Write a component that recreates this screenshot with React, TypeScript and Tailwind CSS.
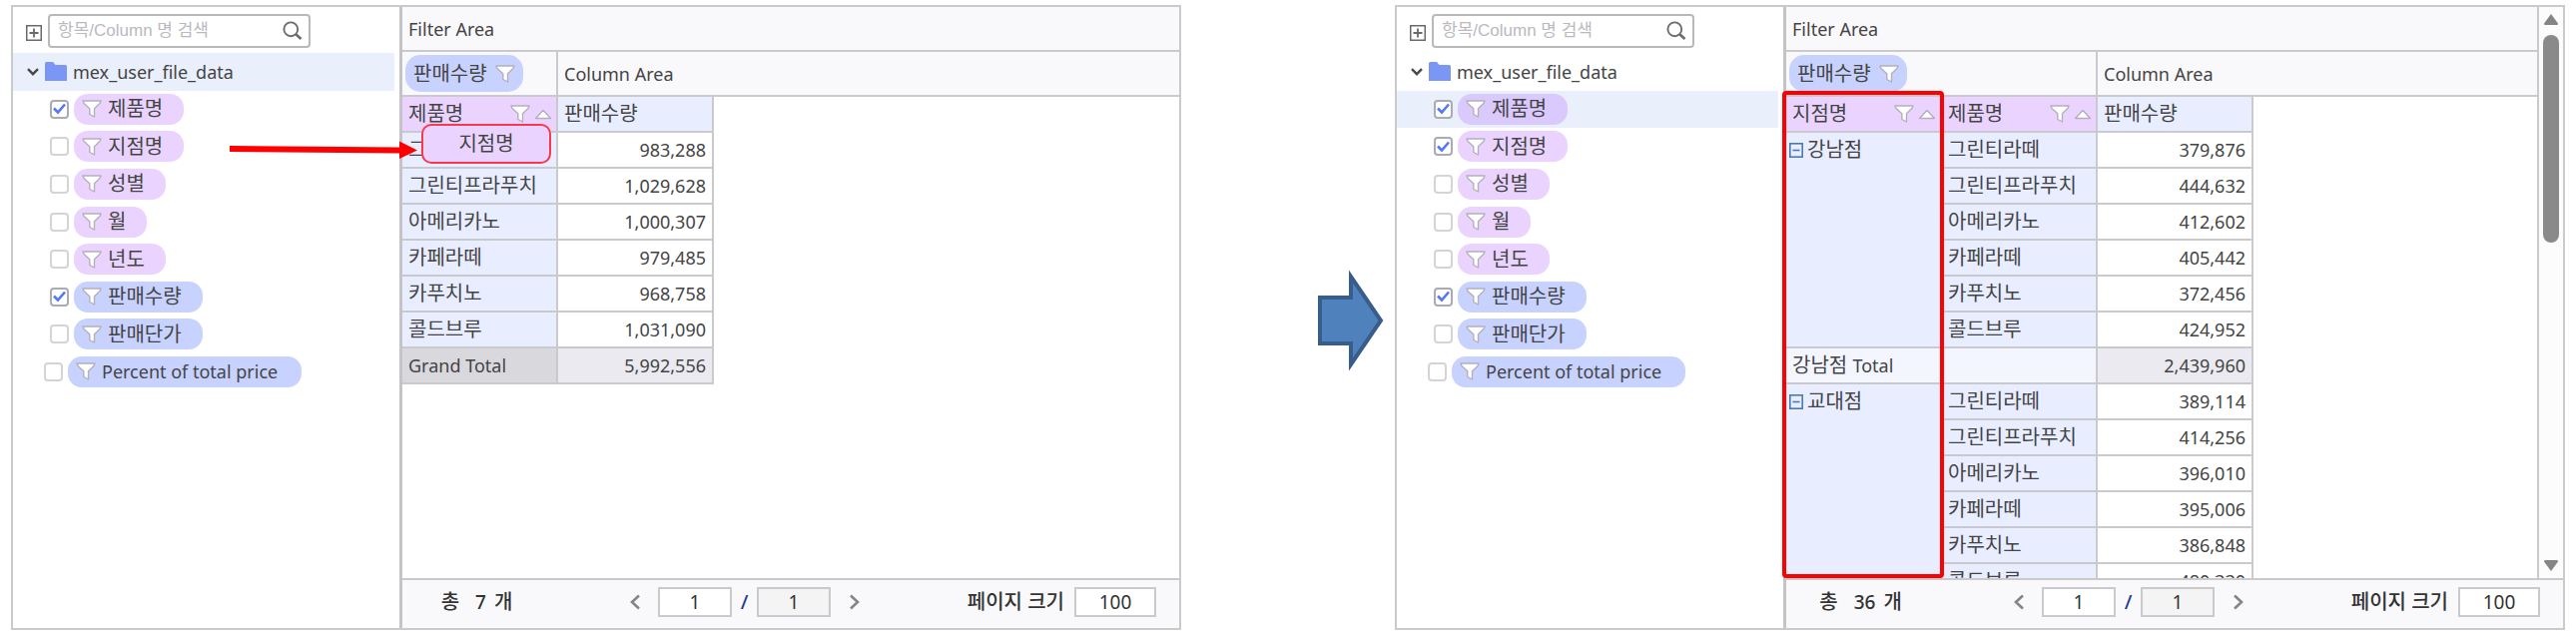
import React, { useState } from 'react';

type Tone = 'dimension' | 'measure';

interface Field {
  name: string;
  tone: Tone;
}

interface Row {
  product: string;
  value: string;
}

interface Branch {
  name: string;
  total?: string;
  rows: Row[];
}

const FIELDS: Field[] = [
  { name: '제품명', tone: 'dimension' },
  { name: '지점명', tone: 'dimension' },
  { name: '성별', tone: 'dimension' },
  { name: '월', tone: 'dimension' },
  { name: '년도', tone: 'dimension' },
  { name: '판매수량', tone: 'measure' },
  { name: '판매단가', tone: 'measure' },
  { name: 'Percent of total price', tone: 'measure' },
];

const PRODUCT_ROWS: Row[] = [
  { product: '그린티라떼', value: '983,288' },
  { product: '그린티프라푸치', value: '1,029,628' },
  { product: '아메리카노', value: '1,000,307' },
  { product: '카페라떼', value: '979,485' },
  { product: '카푸치노', value: '968,758' },
  { product: '콜드브루', value: '1,031,090' },
];

const BRANCHES: Branch[] = [
  {
    name: '강남점',
    total: '2,439,960',
    rows: [
      { product: '그린티라떼', value: '379,876' },
      { product: '그린티프라푸치', value: '444,632' },
      { product: '아메리카노', value: '412,602' },
      { product: '카페라떼', value: '405,442' },
      { product: '카푸치노', value: '372,456' },
      { product: '콜드브루', value: '424,952' },
    ],
  },
  {
    name: '교대점',
    rows: [
      { product: '그린티라떼', value: '389,114' },
      { product: '그린티프라푸치', value: '414,256' },
      { product: '아메리카노', value: '396,010' },
      { product: '카페라떼', value: '395,006' },
      { product: '카푸치노', value: '386,848' },
      { product: '콜드브루', value: '480,330' },
    ],
  },
];

const CELL = 'h-9 border-r-2 border-b-2 border-[#cacacc] p-0 font-normal';

// --- Icons ---

const FunnelIcon = () => (
  <svg viewBox="0 0 20 18" className="h-[18px] w-5 shrink-0">
    <path
      d="M1 1H19L18 3.5L12.5 8.8V17L7.8 14.5V8.8L2 3.5Z"
      fill="#fff"
      stroke="#b4b0ba"
      strokeWidth="1.4"
      strokeLinejoin="round"
    />
  </svg>
);

const SortIcon = () => (
  <svg viewBox="0 0 18 11" className="h-[11px] w-[18px] shrink-0">
    <path d="M1.5 9.5L9 1.5L16.5 9.5Z" fill="#fff" stroke="#b4b0ba" strokeWidth="1.4" strokeLinejoin="round" />
  </svg>
);

const ExpandAllIcon = () => (
  <svg viewBox="0 0 16 16" className="h-4 w-4" fill="none" stroke="#6a6a6a">
    <rect x="0.75" y="0.75" width="14.5" height="14.5" strokeWidth="1.5" />
    <path d="M8 3.5V12.5M3.5 8H12.5" strokeWidth="1.8" />
  </svg>
);

const CollapseIcon = () => (
  <svg viewBox="0 0 14 15" className="h-[15px] w-3.5 shrink-0" fill="none" stroke="#4a7ab0" strokeWidth="1.6">
    <rect x="0.8" y="0.8" width="12.4" height="13.4" />
    <path d="M3.5 7.5H10.5" />
  </svg>
);

const SearchIcon = () => (
  <svg viewBox="0 0 20 20" className="h-5 w-5" fill="none" stroke="#6c6c6c">
    <circle cx="8.3" cy="8.3" r="6.9" strokeWidth="1.9" />
    <path d="M13.2 13.2L18.5 18" strokeWidth="2.6" />
  </svg>
);

const FolderIcon = () => (
  <svg viewBox="0 0 22 19" className="h-[19px] w-[22px]">
    <path d="M0 1.5Q0 0 1.5 0H8L10.5 3H20.5Q22 3 22 4.5V19H0Z" fill="#7a97f5" />
  </svg>
);

const Chevron = ({ d }: { d: string }) => (
  <svg viewBox="0 0 12 16" className="h-4 w-3" fill="none" stroke="#858585" strokeWidth="2.6">
    <path d={d} />
  </svg>
);

// --- Sidebar ---

interface SidebarProps {
  id: string;
  initial: string[];
  active: string;
}

const FieldSidebar = ({ id, initial, active }: SidebarProps) => {
  const [checked, setChecked] = useState<string[]>(initial);

  const toggle = (name: string) => {
    setChecked(checked.includes(name) ? checked.filter((n) => n !== name) : [...checked, name]);
  };

  const pillColor = (field: Field) => {
    if (field.name === active) return 'bg-[#dac9fd]';
    return field.tone === 'dimension' ? 'bg-[#ead4ff]' : 'bg-[#c8d2ff]';
  };

  return (
    <aside className="w-[390px] shrink-0 border-r-[3px] border-[#c4c4c6] bg-white">
      <div className="flex h-[46px] items-center pt-0.5 pl-[13px]">
        <button type="button" aria-label="모두 펼치기" className="mr-1.5 pt-1">
          <ExpandAllIcon />
        </button>
        <div className="flex h-[34px] w-[263px] items-center rounded border-2 border-[#b9b9b9] pr-1.5 pl-2">
          <input
            type="text"
            aria-label="항목/Column 명 검색"
            placeholder="항목/Column 명 검색"
            className="min-w-0 flex-1 bg-transparent font-['Liberation_Sans','Noto_Sans_CJK_KR',sans-serif] text-[17px] leading-6 outline-none placeholder:text-[#b9b9bf]"
          />
          <button type="button" aria-label="검색">
            <SearchIcon />
          </button>
        </div>
      </div>

      <ul className="flex h-[338px] flex-col pr-[5px]">
        <li
          className={`flex flex-1 items-center pl-3.5 text-lg ${active === 'root' ? 'bg-[#eaeffc]' : ''}`}
        >
          <svg viewBox="0 0 12 8" className="mr-1.5 h-2 w-3" fill="none" stroke="#4a4a4a" strokeWidth="2.4">
            <path d="M1 1.2L6 6.2L11 1.2" />
          </svg>
          <FolderIcon />
          <span className="ml-1.5 leading-7">mex_user_file_data</span>
        </li>
        {FIELDS.map((field) => {
          const isLatin = field.name.startsWith('Percent');
          return (
            <li
              key={field.name}
              className={`flex flex-1 items-center ${isLatin ? 'pl-[31px]' : 'pl-[37px]'} ${
                active === field.name ? 'bg-[#eaeffc]' : ''
              }`}
            >
              <span className="grid h-[19px] w-[19px] shrink-0 place-items-center">
                <input
                  id={`${id}-${field.name}`}
                  type="checkbox"
                  checked={checked.includes(field.name)}
                  onChange={() => toggle(field.name)}
                  className="peer col-start-1 row-start-1 h-[19px] w-[19px] appearance-none rounded border-2 border-[#d4d4d6] bg-white checked:border-[#ababb3]"
                />
                <svg
                  viewBox="0 0 13 12"
                  className="pointer-events-none invisible col-start-1 row-start-1 h-3 w-[13px] peer-checked:visible"
                  fill="none"
                  stroke="#5577f8"
                  strokeWidth="2.6"
                >
                  <path d="M1 5.5L5 9.5L12 1.5" />
                </svg>
              </span>
              <label
                htmlFor={`${id}-${field.name}`}
                className={`ml-[5px] flex h-[31px] items-center gap-1.5 rounded-[14px] pl-2 ${pillColor(field)} ${
                  isLatin ? 'pr-6 text-lg' : 'pr-[21px] text-xl'
                }`}
              >
                <FunnelIcon />
                <span className="leading-7">{field.name}</span>
              </label>
            </li>
          );
        })}
      </ul>
    </aside>
  );
};

// --- Pivot grid ---

const AreaRows = ({ wide }: { wide?: boolean }) => (
  <>
    <div className="flex h-[45px] items-center border-b-2 border-[#cacacc] bg-[#f9f9fc] pl-1.5 text-lg">
      Filter Area
    </div>
    <div className="flex h-[45px] border-b-2 border-[#cacacc] bg-[#f9f9fc]">
      <div
        className={`flex shrink-0 items-center border-r-2 border-[#cacacc] pl-[3px] ${wide ? 'w-[312px]' : 'w-[156px]'}`}
      >
        <button type="button" className="flex h-[37px] items-center gap-2 rounded-[15px] bg-[#c8d2ff] px-2 text-xl">
          <span className="leading-7">판매수량</span>
          <FunnelIcon />
        </button>
      </div>
      <div className="flex items-center pl-1.5 text-lg">Column Area</div>
    </div>
  </>
);

const DimensionHeader = ({ name }: { name: string }) => (
  <th scope="col" className={`${CELL} w-[156px] bg-[#ead4ff]`}>
    <div className="flex items-center pr-1 pl-1.5 text-xl leading-7">
      <span>{name}</span>
      <span className="ml-auto flex items-center gap-1">
        <FunnelIcon />
        <SortIcon />
      </span>
    </div>
  </th>
);

const MeasureHeader = () => (
  <th scope="col" className={`${CELL} w-[156px] bg-[#e8edff] pl-1.5 text-left text-xl leading-7`}>
    판매수량
  </th>
);

const ProductCells = ({ row }: { row: Row }) => (
  <>
    <th scope="row" className={`${CELL} bg-[#e8edff] pl-1.5 text-left text-xl leading-7 whitespace-nowrap`}>
      {row.product}
    </th>
    <td className={`${CELL} bg-white pr-1.5 text-right text-lg`}>{row.value}</td>
  </>
);

const ProductTable = () => (
  <table className="w-[312px] table-fixed border-separate border-spacing-0">
    <thead>
      <tr>
        <DimensionHeader name="제품명" />
        <MeasureHeader />
      </tr>
    </thead>
    <tbody>
      {PRODUCT_ROWS.map((row) => (
        <tr key={row.product}>
          <ProductCells row={row} />
        </tr>
      ))}
      <tr>
        <th scope="row" className={`${CELL} bg-[#d9d8dd] pl-1.5 text-left text-lg`}>
          Grand Total
        </th>
        <td className={`${CELL} bg-[#ebeaf0] pr-1.5 text-right text-lg`}>5,992,556</td>
      </tr>
    </tbody>
  </table>
);

const BranchTable = () => (
  <table className="w-[468px] table-fixed border-separate border-spacing-0">
    <thead>
      <tr>
        <DimensionHeader name="지점명" />
        <DimensionHeader name="제품명" />
        <MeasureHeader />
      </tr>
    </thead>
    {BRANCHES.map((branch) => (
      <tbody key={branch.name}>
        {branch.rows.map((row, i) => (
          <tr key={row.product}>
            {i === 0 && (
              <th scope="rowgroup" rowSpan={branch.rows.length} className={`${CELL} bg-[#e8edff] align-top`}>
                <button type="button" className="flex items-center gap-1 pt-[3px] pl-[3px] text-xl leading-7">
                  <CollapseIcon />
                  {branch.name}
                </button>
              </th>
            )}
            <ProductCells row={row} />
          </tr>
        ))}
        {branch.total && (
          <tr>
            <th scope="row" className={`${CELL} bg-[#f3f5ff] pl-1.5 text-left text-xl leading-7`}>
              {branch.name} <span className="text-lg">Total</span>
            </th>
            <td className={`${CELL} bg-[#f3f5ff]`} />
            <td className={`${CELL} bg-[#ebeaf0] pr-1.5 text-right text-lg`}>{branch.total}</td>
          </tr>
        )}
      </tbody>
    ))}
  </table>
);

const Pager = ({ id, count }: { id: string; count: number }) => (
  <footer className="flex h-[50px] items-center border-t-2 border-[#cacacc] bg-[#f9f9fc] pr-[23px] pb-1 text-xl font-medium text-[#333]">
    <div className="flex w-[149px] items-baseline justify-center leading-7">
      총<span className="mr-2 ml-4 text-[19px]">{count}</span>개
    </div>
    <button type="button" aria-label="이전 페이지" className="mr-[17px] ml-[78px]">
      <Chevron d="M10 1.5L3 8L10 14.5" />
    </button>
    <input
      aria-label="현재 페이지"
      defaultValue="1"
      className="h-[30px] w-[74px] border-2 border-[#cacacc] bg-white text-center text-[19px] font-normal"
    />
    <span className="w-[25px] text-center text-[#1c3c8c]">/</span>
    <input
      aria-label="전체 페이지"
      readOnly
      value="1"
      className="h-[30px] w-[74px] border-2 border-[#cacacc] bg-[#f4f4f5] text-center text-[19px] font-normal"
    />
    <button type="button" aria-label="다음 페이지" className="ml-[18px]">
      <Chevron d="M2 1.5L9 8L2 14.5" />
    </button>
    <label htmlFor={`${id}-size`} className="mr-2.5 ml-auto leading-7">
      페이지 크기
    </label>
    <input
      id={`${id}-size`}
      defaultValue="100"
      className="h-[30px] w-[82px] border-2 border-[#cacacc] bg-white text-center text-[19px] font-normal"
    />
  </footer>
);

const ScrollBar = () => (
  <div className="flex w-[26px] shrink-0 flex-col items-center border-l-2 border-[#cacacc] bg-[#fcfcfc] py-[7px]">
    <svg viewBox="0 0 14 11" className="h-[11px] w-3.5" fill="#858585">
      <path d="M7 0L14 9.5Q14 11 13 11H1Q0 11 0 9.5Z" />
    </svg>
    <div className="mt-2.5 h-[208px] w-4 rounded-full bg-[#8a8a8a]" />
    <svg viewBox="0 0 14 11" className="mt-auto h-[11px] w-3.5" fill="#858585">
      <path d="M7 11L14 1.5Q14 0 13 0H1Q0 0 0 1.5Z" />
    </svg>
  </div>
);

export default function App() {
  return (
    <main className="flex bg-white px-[11px] pt-[5px] pb-[7px] font-['Noto_Sans','Noto_Sans_CJK_KR',sans-serif] text-[#444]">
      {/* Before: field being dragged into the row area */}
      <section className="relative flex min-w-0 flex-1 border-2 border-[#cacacc]">
        <FieldSidebar id="before" initial={['제품명', '판매수량']} active="root" />
        <div className="flex min-w-0 flex-1 flex-col">
          <div className="h-[572px] overflow-hidden">
            <AreaRows />
            <ProductTable />
          </div>
          <Pager id="before" count={7} />
        </div>
        <div className="absolute top-[117px] left-[409px] flex h-10 w-[130px] items-center justify-center rounded-[10px] border-2 border-[#f8384c] bg-[#ead4ff] text-xl leading-7">
          지점명
        </div>
        <svg viewBox="0 0 188 18" className="absolute top-[134px] left-[217px] h-[18px] w-[188px]" fill="#fe0000">
          <path d="M0 5L170 6.5V0.5L188 9.5L170 18V12.5L0 11Z" />
        </svg>
      </section>

      <div className="flex w-[214px] shrink-0 items-center pt-1.5 pl-[137px]">
        <svg viewBox="0 0 66 104" className="h-[104px] w-[66px]">
          <path
            d="M2 29H33V8L63 52L33 96V75H2Z"
            fill="#4f81bd"
            stroke="#385d8a"
            strokeWidth="4"
          />
        </svg>
      </div>

      {/* After: grouped by branch */}
      <section className="relative flex min-w-0 flex-1 border-2 border-[#cacacc]">
        <FieldSidebar id="after" initial={['제품명', '지점명', '판매수량']} active="제품명" />
        <div className="flex min-w-0 flex-1 flex-col">
          <div className="flex h-[572px] overflow-hidden">
            <div className="min-w-0 flex-1">
              <AreaRows wide />
              <BranchTable />
            </div>
            <ScrollBar />
          </div>
          <Pager id="after" count={36} />
        </div>
        <div className="pointer-events-none absolute top-[84px] left-[386px] h-[488px] w-[162px] rounded-sm border-4 border-[#fe0000]" />
      </section>
    </main>
  );
}
